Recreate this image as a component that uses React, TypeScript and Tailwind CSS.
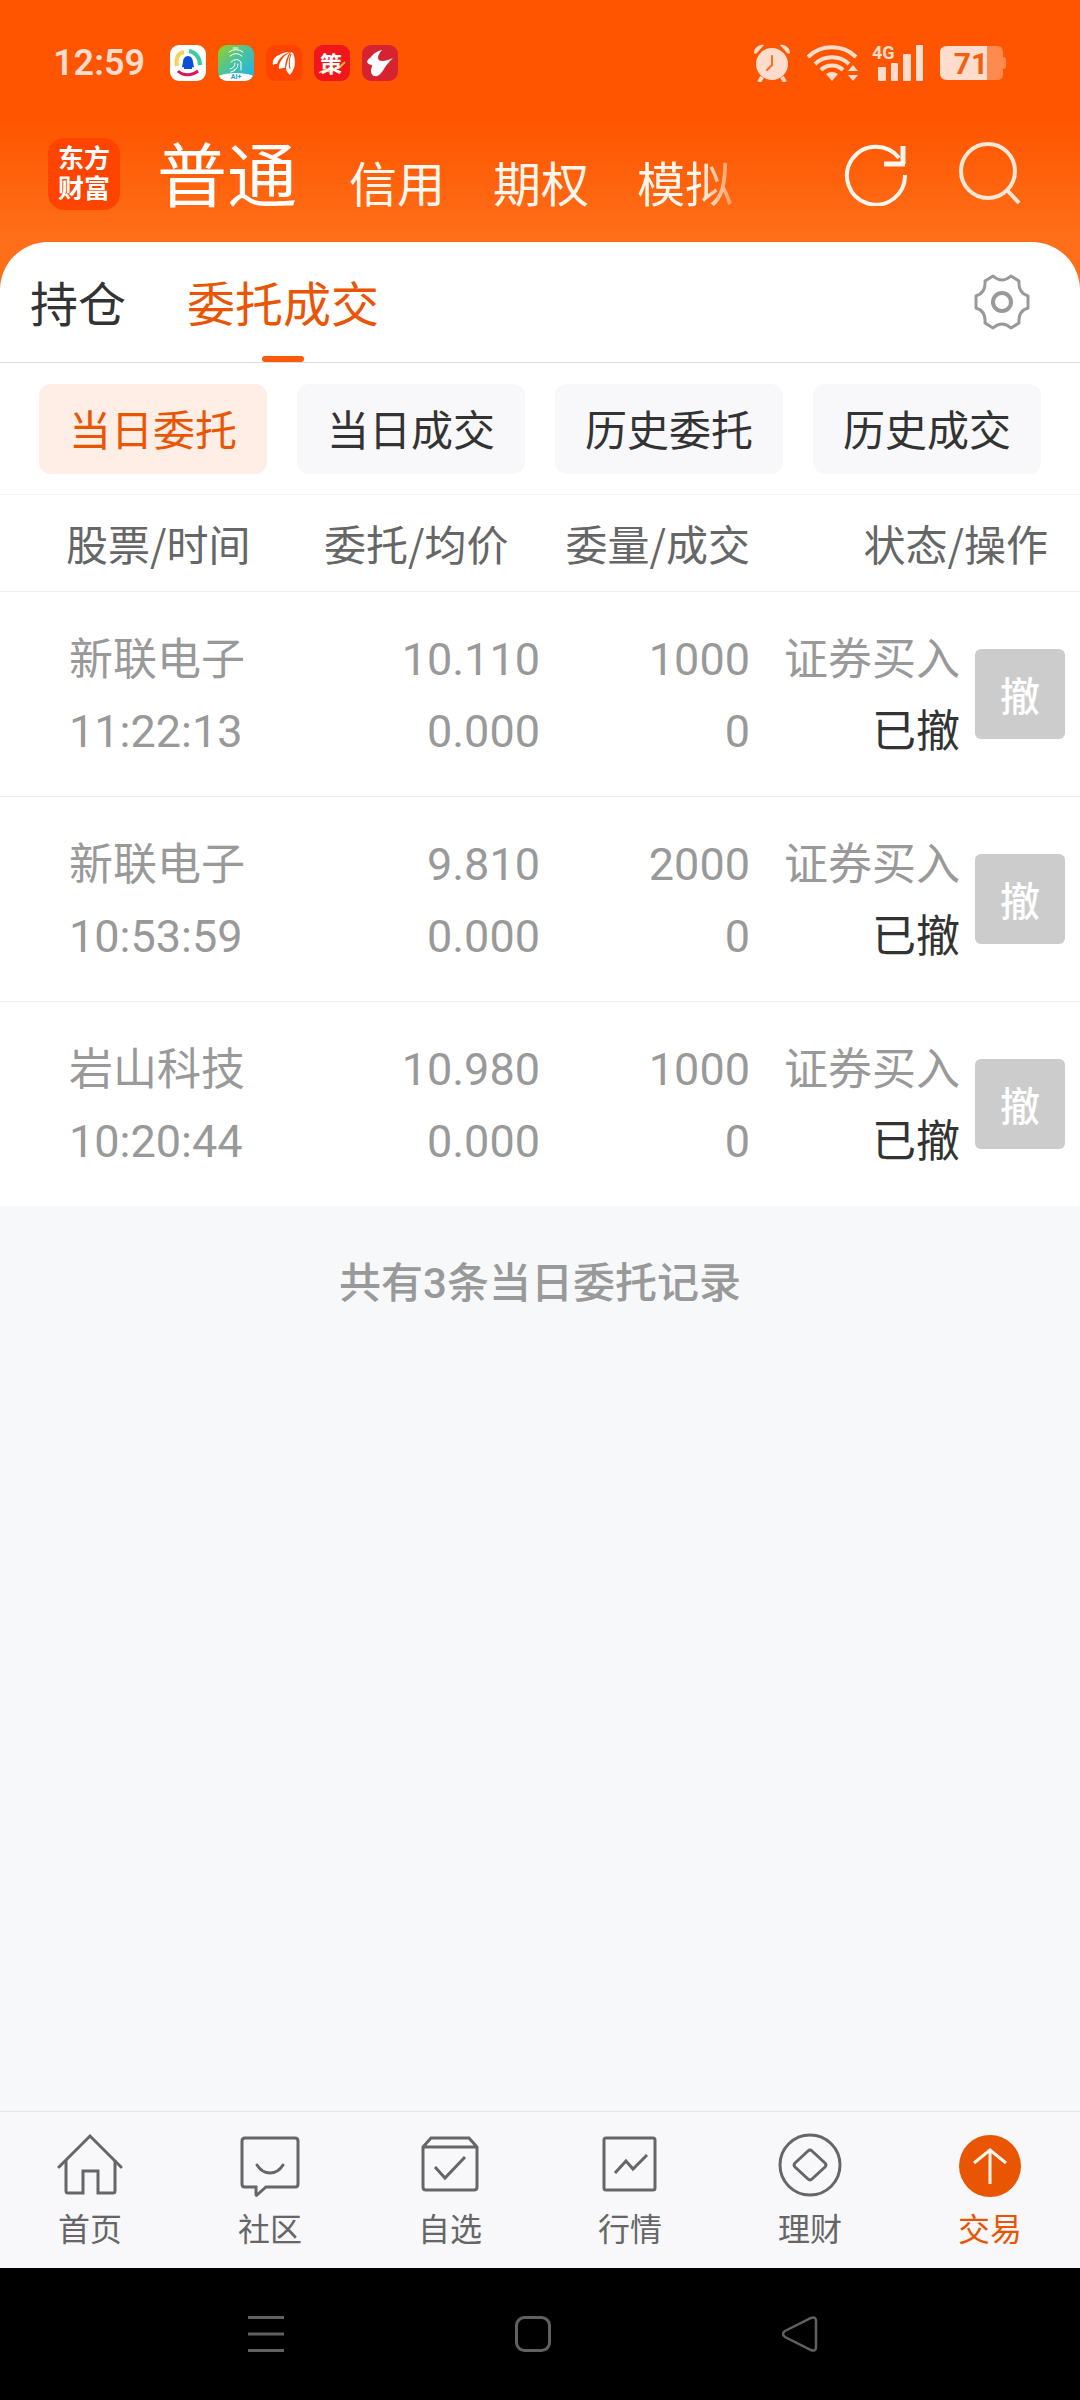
import React from 'react';

interface Order {
  name: string;
  time: string;
  price: string;
  average: string;
  volume: string;
  filled: string;
  side: string;
  status: string;
}

interface NavItem {
  label: string;
  icon: React.ReactNode;
  active?: boolean;
}

const orders: Order[] = [
  { name: '新联电子', time: '11:22:13', price: '10.110', average: '0.000', volume: '1000', filled: '0', side: '证券买入', status: '已撤' },
  { name: '新联电子', time: '10:53:59', price: '9.810', average: '0.000', volume: '2000', filled: '0', side: '证券买入', status: '已撤' },
  { name: '岩山科技', time: '10:20:44', price: '10.980', average: '0.000', volume: '1000', filled: '0', side: '证券买入', status: '已撤' },
];

const filters = ['当日委托', '当日成交', '历史委托', '历史成交'];

const navItems: NavItem[] = [
  {
    label: '首页',
    icon: (
      <>
        <path d="M2 34 33 3l31 31" strokeLinecap="round" />
        <path d="M9 27v31q0 2 2 2h15V38h15v22h15q2 0 2-2V27" />
      </>
    ),
  },
  {
    label: '社区',
    icon: (
      <>
        <path d="M8 5h50q3 0 3 3v43q0 3-3 3H29l-9 8q-1 1-1-1v-7H8q-3 0-3-3V8q0-3 3-3z" />
        <path d="M20 32q5 8 13 8t13-8" strokeLinecap="round" />
      </>
    ),
  },
  {
    label: '自选',
    icon: (
      <>
        <path d="M6 14 14 5h38l8 9v40q0 3-3 3H9q-3 0-3-3zM6 14h54" />
        <path d="m18 34 10 11 20-21" />
      </>
    ),
  },
  {
    label: '行情',
    icon: (
      <>
        <rect x="7" y="5" width="51" height="52" rx="2" />
        <path d="m18 40 11-12 7 8 14-14" />
      </>
    ),
  },
  {
    label: '理财',
    icon: (
      <>
        <circle cx="33" cy="32" r="30" />
        <path d="m31 18-13 12q-2 2 0 4l13 12q2 2 4 0l13-12q2-2 0-4L35 18q-2-2-4 0z" />
      </>
    ),
  },
  {
    label: '交易',
    active: true,
    icon: (
      <>
        <circle cx="33" cy="33" r="31" fill="#ea5504" stroke="none" />
        <path d="M33 51V18M17 30l16-13 16 13" stroke="#fff3ea" />
      </>
    ),
  },
];

const AppBadges: React.FC = () => (
  <div className="flex gap-3">
    <svg className="size-9" viewBox="0 0 36 36" aria-hidden="true">
      <rect width="36" height="36" rx="9" fill="#fff" />
      <g fill="none">
        <path d="M7 21C5 14 8 8 14 7" stroke="#f3d35b" strokeWidth="4" />
        <path d="M19 6c6 1 11 6 11 14" stroke="#3fc9a4" strokeWidth="4" />
        <path d="M8 26c5 5 14 5 20 0" stroke="#d8185c" strokeWidth="3" />
      </g>
      <path d="M18 11c-3 0-5 3-5 6l-1 5c1 1 2 0 2 0v2h8v-2s1 1 2 0l-1-5c0-3-2-6-5-6z" fill="#0d4fd6" />
    </svg>
    <svg className="size-9" viewBox="0 0 36 36" aria-hidden="true">
      <defs>
        <linearGradient id="finger" x1="0" y1="0" x2="1" y2="1">
          <stop offset="0" stopColor="#98cf1f" />
          <stop offset="0.5" stopColor="#45c2a4" />
          <stop offset="1" stopColor="#1fb0ef" />
        </linearGradient>
        <clipPath id="finger-clip">
          <rect width="36" height="36" rx="9" />
        </clipPath>
      </defs>
      <g clipPath="url(#finger-clip)">
        <rect width="36" height="36" fill="url(#finger)" />
        <ellipse cx="18" cy="37" rx="24" ry="9" fill="#fff" />
      </g>
      <g fill="none" stroke="#fff" strokeWidth="1" strokeLinecap="round">
        <path d="M15 3h5M11 7q7-5 14 0M12 11q6-5 12 0" />
        <path d="M13 17q6-5 10 0v8M17 18q0 5-5 6M20 19q0 6-7 8M16 26l1-2" />
      </g>
      <text x="18" y="34" textAnchor="middle" fontSize="7" fontWeight="700" fill="#1c9fd8">AI+</text>
    </svg>
    <svg className="size-9" viewBox="0 0 36 36" aria-hidden="true">
      <rect width="36" height="36" rx="9" fill="#ff4400" />
      <path
        d="M7 20c-1-4 1-8 6-10 3-2 7-3 10-3-6 3-10 6-12 12-2 0-3 0-4 1zM13 24c-1-5 3-12 11-17-3 5-5 10-5 16-2 0-4 0-6 1zM24 30c-2-2-4-4-4-7 1-6 3-12 5-16l2 1c3 7 3 15-3 22z"
        fill="#fff"
      />
      <path d="M25 9c-2 5-2 10-1 15" fill="none" stroke="#ff4400" strokeWidth="1" />
    </svg>
    <svg className="size-9" viewBox="0 0 36 36" aria-hidden="true">
      <rect width="36" height="36" rx="9" fill="#f0161b" />
      <path d="M5 28 12 24l4 3 10-5 5-5" fill="none" stroke="#ffb43a" strokeWidth="2" />
      <text x="17" y="27" textAnchor="middle" fontSize="22" fontWeight="700" fill="#fff">策</text>
    </svg>
    <svg className="size-9" viewBox="0 0 36 36" aria-hidden="true">
      <rect width="36" height="36" rx="9" fill="#d62332" />
      <path d="M20 5c-3 3-4 6-4 8 0 2 2 3 4 3 4 0 8-2 11-3-4 4-7 7-9 11-2 3-4 6-7 7-4 1-6-2-6-5 0-2 1-4 1-6-2 0-4-1-5-3 0-2 2-3 4-5 3-4 6-6 11-7z" fill="#fff" />
    </svg>
  </div>
);

const StatusIcons: React.FC = () => (
  <div className="flex items-center text-[#ffdccb]">
    <svg className="mr-4 h-[38px] w-[38px]" viewBox="0 0 38 38" fill="currentColor" aria-hidden="true">
      <circle cx="19" cy="20" r="16" />
      <path d="M1 9C1 4 6 0 11 1L3 10zM37 9C37 4 32 0 27 1l8 9z" />
      <path d="m9 33-3 5M29 33l3 5" stroke="currentColor" strokeWidth="4" />
      <path d="M19 12v9l-5 5" fill="none" stroke="#ff6a20" strokeWidth="2" strokeLinecap="round" />
    </svg>
    <svg className="mr-3 h-[38px] w-[53px]" viewBox="0 0 53 38" fill="currentColor" aria-hidden="true">
      <g fill="none" stroke="currentColor" strokeWidth="4">
        <path d="M1 13C14 0 36 0 49 13" />
        <path d="M8 20c9-9 25-9 34 0" />
        <path d="M14 26c6-6 16-6 22 0" />
      </g>
      <path d="M19 30q6-4 12 0l-6 7zM41 27l5-6 5 6zM41 31h10l-5 6z" />
    </svg>
    <svg className="mr-4 h-[38px] w-[52px] overflow-visible" viewBox="0 0 52 38" fill="currentColor" aria-hidden="true">
      <text x="0" y="15" fontSize="18" fontWeight="700">4G</text>
      <rect x="6" y="23" width="8" height="14" rx="1" />
      <rect x="19" y="19" width="7" height="18" rx="1" />
      <rect x="31" y="10" width="8" height="27" rx="1" />
      <rect x="44" y="1" width="7" height="36" rx="1" />
    </svg>
    <svg className="h-[38px] w-[67px]" viewBox="0 0 67 38" aria-hidden="true">
      <path d="M47 2h10q6 0 6 6v5q3 0 3 3v6q0 3-3 3v5q0 6-6 6H47z" fill="#ff8a4d" />
      <path d="M7 2h40v34H7q-7 0-7-7V9q0-7 7-7z" fill="currentColor" />
      <text x="31" y="30" textAnchor="middle" fontSize="30" fontWeight="700" fill="#f2600f">71</text>
    </svg>
  </div>
);

const Header: React.FC = () => (
  <header className="bg-[linear-gradient(#ff5500_120px,#ff6f19_240px)]">
    <div className="flex h-[126px] items-center justify-between pr-[73px] pl-[53px]">
      <div className="flex items-center gap-[25px]">
        <span className="text-4xl font-semibold text-[#ffdccb]">12:59</span>
        <AppBadges />
      </div>
      <StatusIcons />
    </div>

    <div className="flex h-[116px] items-start pr-[58px] pl-12">
      <div className="mt-3 flex size-[72px] shrink-0 flex-col items-center justify-center rounded-2xl bg-[#ff4400] text-[26px] leading-[30px] font-bold text-white">
        <span>东方</span>
        <span>财富</span>
      </div>
      <nav className="ml-[37px] flex flex-1 items-baseline gap-12 font-['Noto_Sans_CJK_SC',sans-serif] text-[48px] leading-[72px] text-[#fff6ee]">
        <a href="#normal" className="pr-1 text-[70px] leading-[92px] text-white">普通</a>
        <a href="#credit">信用</a>
        <a href="#options">期权</a>
        <a href="#mock" className="mask-[linear-gradient(to_right,#000_66%,transparent_120%)]">模拟</a>
      </nav>
      <div className="mt-4 flex gap-[50px]">
        <button type="button" aria-label="刷新">
          <svg className="size-16" viewBox="0 0 64 64" fill="none" stroke="#fff6ee" strokeWidth="4" aria-hidden="true">
            <path d="M61 33A29 29 0 1 1 55 16" />
            <path d="M59 4v18M40 22h21" strokeWidth="5" />
          </svg>
        </button>
        <button type="button" aria-label="搜索">
          <svg className="size-16" viewBox="0 0 64 64" fill="none" stroke="#ffe6d6" strokeWidth="4" aria-hidden="true">
            <circle cx="30" cy="29" r="27" />
            <path d="m48 47 13 14" />
          </svg>
        </button>
      </div>
    </div>

    <div className="flex h-[121px] items-stretch rounded-t-[48px] border-b border-[#dddddd] bg-white pr-[50px] pl-[30px] font-['Noto_Sans_CJK_SC',sans-serif]">
      <nav className="flex flex-1 gap-[61px] text-[48px] leading-[46px]">
        <a href="#positions" className="pt-9 text-[#333333]">持仓</a>
        <a href="#orders" className="flex flex-col items-center justify-between pt-9 text-[#ea5504]" aria-current="page">
          委托成交
          <span className="h-1.5 w-[42px] rounded-full bg-[#fa5a0a]" />
        </a>
      </nav>
      <button type="button" aria-label="设置">
        <svg className="size-14" viewBox="0 0 56 56" fill="none" stroke="#999999" strokeWidth="3" strokeLinejoin="round" aria-hidden="true">
          <path d="M19 2q9 8 18 0l8 5q-1 12 9 15v12q-10 3-9 15l-8 5q-9-8-18 0l-8-5q1-12-9-15V22q10-3 9-15z" />
          <circle cx="28" cy="28" r="9" strokeWidth="4" />
        </svg>
      </button>
    </div>
  </header>
);

const OrderTable: React.FC = () => (
  <table className="w-full table-fixed border-collapse bg-white">
    <colgroup>
      <col className="w-[30%]" />
      <col className="w-[20%]" />
      <col />
      <col className="w-[210px]" />
      <col className="w-[120px]" />
    </colgroup>
    <thead>
      <tr className="h-24 border-b border-[#ececec] font-['Noto_Sans_CJK_SC',sans-serif] text-[42px] whitespace-nowrap text-[#666666]">
        <th className="pl-[66px] text-left font-normal">股票/时间</th>
        <th className="pr-8 text-right font-normal">委托/均价</th>
        <th className="text-right font-normal">委量/成交</th>
        <th colSpan={2} className="pr-8 text-right font-normal">状态/操作</th>
      </tr>
    </thead>
    <tbody className="text-[45px] leading-[72px] text-[#999999]">
      {orders.map((order) => (
        <tr key={order.time} className="h-[205px] border-b border-[#ececec] text-right last:border-b-0">
          <td className="pt-1 pl-[69px] text-left">
            <div className="text-[44px]">{order.name}</div>
            <div>{order.time}</div>
          </td>
          <td className="pt-1">
            <div>{order.price}</div>
            <div>{order.average}</div>
          </td>
          <td className="pt-1">
            <div>{order.volume}</div>
            <div>{order.filled}</div>
          </td>
          <td className="pt-1 text-[44px]">
            <div>{order.side}</div>
            <div className="text-[#333333]">{order.status}</div>
          </td>
          <td className="pl-[15px] text-left">
            <button
              type="button"
              className="block size-[90px] rounded-md bg-[#cccccc] font-['Noto_Sans_CJK_SC',sans-serif] text-[40px] leading-[88px] font-medium text-white"
            >
              撤
            </button>
          </td>
        </tr>
      ))}
    </tbody>
  </table>
);

const BottomNav: React.FC = () => (
  <nav className="grid grid-cols-6 border-t border-[#e4e4e6] bg-[#f8f8fa] pt-[21px] pb-[17px] font-['Noto_Sans_CJK_SC',sans-serif] text-[32px] leading-[48px]">
    {navItems.map((item) => (
      <a
        key={item.label}
        href={`#${item.label}`}
        className={`flex flex-col items-center gap-1 ${item.active ? 'text-[#ea5504]' : 'text-[#666666]'}`}
      >
        <svg className="h-[66px] w-[66px]" viewBox="0 0 66 66" fill="none" stroke="currentColor" strokeWidth="3" aria-hidden="true">
          {item.icon}
        </svg>
        {item.label}
      </a>
    ))}
  </nav>
);

const SystemBar: React.FC = () => (
  <div className="grid h-[132px] grid-cols-3 place-items-center bg-black pr-[147px] pl-[132px]">
    <button type="button" aria-label="最近任务">
      <svg className="size-9" viewBox="0 0 36 36" stroke="#606060" strokeWidth="3" aria-hidden="true">
        <path d="M0 1.500h36M0 18h36M0 34.500h36" />
      </svg>
    </button>
    <button type="button" aria-label="主屏幕">
      <svg className="size-9" viewBox="0 0 36 36" fill="none" stroke="#606060" strokeWidth="3" aria-hidden="true">
        <rect x="1.500" y="1.500" width="33" height="33" rx="8" />
      </svg>
    </button>
    <button type="button" aria-label="返回">
      <svg className="size-9" viewBox="0 0 36 36" fill="none" stroke="#606060" strokeWidth="2.500" aria-hidden="true">
        <path d="M3 15 29 2q5-2 5 3v26q0 5-5 3L3 21q-4-3 0-6z" />
      </svg>
    </button>
  </div>
);

const App: React.FC = () => {
  return (
    <div className="flex min-h-screen flex-col bg-[#f6f8fa] font-['Roboto','Noto_Sans_CJK_SC',sans-serif]">
      <Header />
      <main className="flex-1">
        <div className="grid grid-cols-4 gap-[30px] border-b border-[#f5f5f5] bg-white px-[39px] pt-[21px] pb-5">
          {filters.map((filter, index) => (
            <button
              key={filter}
              type="button"
              aria-pressed={index === 0}
              className={`h-[90px] rounded-xl pb-1 font-['Noto_Sans_CJK_SC',sans-serif] text-[42px] ${index === 0 ? 'bg-[#feeee6] text-[#ea5504]' : 'bg-[#f8f8fa] text-[#333333]'}`}
            >
              {filter}
            </button>
          ))}
        </div>
        <OrderTable />
        <p className="pt-[45px] text-center text-[42px] leading-[66px] font-medium text-[#999999]">共有3条当日委托记录</p>
      </main>
      <BottomNav />
      <SystemBar />
    </div>
  );
};

export default App;
